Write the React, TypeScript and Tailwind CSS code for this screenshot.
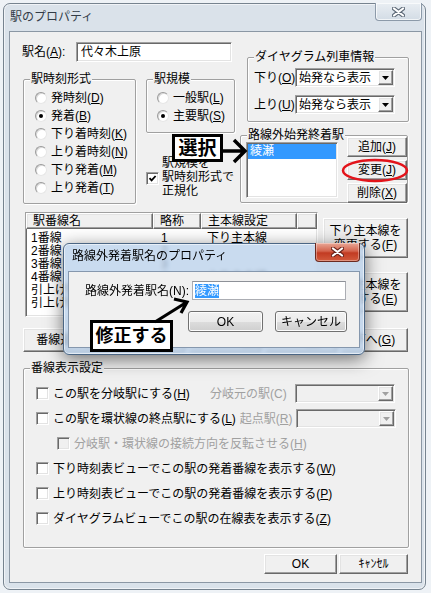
import React from "react";

const FONT = "font-['Liberation_Sans','Noto_Sans_CJK_JP',sans-serif]";

// classic 3D edges
const sunken =
  "border border-t-[#a0a0a0] border-l-[#a0a0a0] border-b-white border-r-white shadow-[inset_1px_1px_0_#696969,inset_-1px_-1px_0_#e3e3e3]";
const raised =
  "border border-t-white border-l-white border-b-[#696969] border-r-[#696969] shadow-[inset_-1px_-1px_0_#a0a0a0,inset_1px_1px_0_#e3e3e3] bg-[#f0f0f0]";

function Mn({ t, k, after = "" }: { t: string; k?: string; after?: string }) {
  return (
    <>
      {t}
      {k && (
        <>
          (<span className="underline underline-offset-[1px]">{k}</span>)
        </>
      )}
      {after}
    </>
  );
}

function Group({ label, className = "", children }: { label: string; className?: string; children?: React.ReactNode }) {
  return (
    <div className={`relative rounded-[2px] border border-[#a0a0a0] shadow-[1px_1px_0_#fff,inset_1px_1px_0_#fff] ${className}`}>
      <span className="absolute left-[6px] top-[-8px] whitespace-nowrap bg-[#f0f0f0] px-[1px] leading-[14px]">{label}</span>
      {children}
    </div>
  );
}

function Radio({ on, children }: { on?: boolean; children: React.ReactNode }) {
  return (
    <div className="flex h-[18px] items-center gap-[4px] whitespace-nowrap">
      <span className="flex h-[12px] w-[12px] items-center justify-center rounded-full border border-t-[#9a9a9a] border-l-[#9a9a9a] border-b-[#e6e6e6] border-r-[#e6e6e6] bg-white shadow-[inset_1px_1px_0_#d8d8d8]">
        {on && <span className="h-[4px] w-[4px] rounded-full bg-black" />}
      </span>
      <span className="leading-[14px]">{children}</span>
    </div>
  );
}

function Box({ on, disabled }: { on?: boolean; disabled?: boolean }) {
  return (
    <span className={`flex h-[13px] w-[13px] shrink-0 items-center justify-center ${sunken} ${disabled ? "bg-[#f0f0f0]" : "bg-white"}`}>
      {on && (
        <svg width="9" height="9" viewBox="0 0 9 9">
          <path d="M1.5 4.2 L3.6 6.4 L7.6 2" stroke="#000" strokeWidth="1.8" fill="none" />
        </svg>
      )}
    </span>
  );
}

function Check({ on, disabled, children }: { on?: boolean; disabled?: boolean; children: React.ReactNode }) {
  return (
    <div className="flex shrink-0 items-center gap-[4px] whitespace-nowrap">
      <Box on={on} disabled={disabled} />
      <span className={`leading-[14px] ${disabled ? "text-[#a0a0a0]" : ""}`}>{children}</span>
    </div>
  );
}

function Combo({ value, disabled, className = "" }: { value?: string; disabled?: boolean; className?: string }) {
  return (
    <div className={`flex h-[19px] w-[100px] shrink-0 items-center ${sunken} ${disabled ? "bg-[#f0f0f0]" : "bg-white"} ${className}`}>
      <span className="flex-1 whitespace-nowrap pl-[3px] leading-[14px]">{value}</span>
      <span className={`mr-[1px] flex h-[15px] w-[15px] items-center justify-center ${raised}`}>
        <svg width="7" height="4" viewBox="0 0 7 4">
          <path d="M0 0h7L3.5 4z" fill={disabled ? "#a0a0a0" : "#000"} />
        </svg>
      </span>
    </div>
  );
}

function Btn({ className = "", children }: { className?: string; children: React.ReactNode }) {
  return (
    <div className={`flex shrink-0 items-center justify-center whitespace-nowrap text-center leading-[14px] ${raised} ${className}`}>
      <span>{children}</span>
    </div>
  );
}

function AeroBtn({ className = "", children }: { className?: string; children: React.ReactNode }) {
  return (
    <div
      className={`flex items-center justify-center rounded-[3px] border border-[#707070] bg-[linear-gradient(#f2f2f2,#ebebeb_50%,#dddddd_51%,#cfcfcf)] leading-[14px] shadow-[inset_0_0_0_1px_#fcfcfc] ${className}`}
    >
      {children}
    </div>
  );
}

function CloseX({ outline }: { outline: string }) {
  return (
    <svg width="13" height="10" viewBox="0 0 13 10">
      <path d="M2 1.5 L11 8.5 M11 1.5 L2 8.5" stroke={outline} strokeWidth="4.2" strokeLinecap="round" />
      <path d="M2 1.5 L11 8.5 M11 1.5 L2 8.5" stroke="#fff" strokeWidth="2.2" strokeLinecap="round" />
    </svg>
  );
}

const rows = [
  ["1番線", "1", "下り主本線"],
  ["2番線", "2", ""],
  ["3番線", "3", ""],
  ["4番線", "4", "上り主本線"],
  ["引上げ線1", "引1", ""],
  ["引上げ線2", "引2", ""],
];

export default function App() {
  return (
    <div className={`relative h-[593px] w-[431px] overflow-hidden bg-[#eef2f6] text-[12px] text-black ${FONT}`}>
      <div className="ml-[3px] pt-[3px]">
        {/* main window */}
        <div className="h-[587px] w-[423px] rounded-[7px] border border-[#76838f] bg-[#dae2ea] shadow-[inset_0_0_0_1px_rgba(255,255,255,0.6)]">
          <div className="flex h-[27px] items-start">
            <span className="pl-[6px] pt-[4px] leading-[18px] text-[#323c47]">駅のプロパティ</span>
            <div className="ml-auto mr-[3px] mt-[-1px] flex h-[18px] w-[47px] items-center justify-center rounded-b-[4px] border border-t-0 border-[#8c9aa9] bg-gradient-to-b from-[#e9eef3] to-[#d3dce5] shadow-[inset_0_0_0_1px_rgba(255,255,255,0.7)]">
              <CloseX outline="#5d6977" />
            </div>
          </div>

          {/* client area */}
          <div className="ml-[5px] h-[552px] w-[413px] border border-[#8b97a4] bg-[#f0f0f0]">
            {/* top section */}
            <div className="flex h-[172px]">
              <div className="w-[230px] pl-[12px]">
                <div className="mt-[10px] flex h-[20px] items-center">
                  <span className="w-[54px] leading-[14px]">
                    <Mn t="駅名" k="A" after=":" />
                  </span>
                  <div className={`flex h-[20px] w-[156px] items-center bg-white pl-[4px] leading-[14px] ${sunken}`}>代々木上原</div>
                </div>
                <div className="mt-[17px] flex">
                  <Group label="駅時刻形式" className="ml-[1px] h-[125px] w-[113px] pl-[11px] pt-[9px]">
                    <Radio><Mn t="発時刻" k="D" /></Radio>
                    <Radio on><Mn t="発着" k="B" /></Radio>
                    <Radio><Mn t="下り着時刻" k="K" /></Radio>
                    <Radio><Mn t="上り着時刻" k="N" /></Radio>
                    <Radio><Mn t="下り発着" k="M" /></Radio>
                    <Radio><Mn t="上り発着" k="T" /></Radio>
                  </Group>
                  <div className="ml-[10px] w-[89px]">
                    <Group label="駅規模" className="h-[54px] pl-[10px] pt-[9px]">
                      <Radio><Mn t="一般駅" k="L" /></Radio>
                      <Radio on><Mn t="主要駅" k="S" /></Radio>
                    </Group>
                    <div className="mt-[23px] flex">
                      <div className="mt-[16px]">
                        <Box on />
                      </div>
                      <div className="ml-[3px] whitespace-nowrap leading-[14px]">
                        駅規模を
                        <br />
                        駅時刻形式で
                        <br />
                        正規化
                      </div>
                    </div>
                  </div>
                </div>
              </div>

              <div className="w-[169px]">
                <Group label="ダイヤグラム列車情報" className="ml-[7px] mt-[25px] h-[65px] w-[162px] pl-[6px] pt-[10px]">
                  <div className="flex h-[19px] items-center">
                    <span className="w-[41px] shrink-0 whitespace-nowrap leading-[14px]"><Mn t="下り" k="O" /></span>
                    <Combo value="始発なら表示" />
                  </div>
                  <div className="mt-[8px] flex h-[19px] items-center">
                    <span className="w-[41px] shrink-0 whitespace-nowrap leading-[14px]"><Mn t="上り" k="U" /></span>
                    <Combo value="始発なら表示" />
                  </div>
                </Group>
                <Group label="路線外始発終着駅" className="mt-[13px] flex h-[68px] w-[168px] pl-[5px]">
                  <div className={`mt-[6px] h-[56px] w-[92px] bg-white p-[1px] ${sunken}`}>
                    <div className="h-[15px] bg-[#3399ff] pl-[2px] leading-[15px] text-white">綾瀬</div>
                  </div>
                  <div className="ml-[9px] mt-[1px] flex flex-col gap-[3px]">
                    <Btn className="h-[20px] w-[60px]"><Mn t="追加" k="J" /></Btn>
                    <Btn className="h-[20px] w-[60px]"><Mn t="変更" k="J" /></Btn>
                    <Btn className="h-[20px] w-[60px]"><Mn t="削除" k="X" /></Btn>
                  </div>
                </Group>
              </div>
            </div>

            {/* track list */}
            <div className="mt-[8px] flex">
              <div className={`ml-[15px] h-[105px] w-[293px] bg-white ${sunken}`}>
                <div className="flex h-[16px] leading-[14px]">
                  <div className={`w-[127px] pl-[6px] ${raised}`}>駅番線名</div>
                  <div className={`w-[48px] pl-[6px] ${raised}`}>略称</div>
                  <div className={`w-[96px] pl-[6px] ${raised}`}>主本線設定</div>
                  <div className={`w-[20px] ${raised}`} />
                </div>
                <div className="pt-[3px]">
                  {rows.map((r, i) => (
                    <div key={i} className="flex h-[13px] items-center whitespace-nowrap leading-[13px]">
                      <span className="w-[127px] pl-[5px]">{r[0]}</span>
                      <span className="w-[48px] pl-[8px]">{r[1]}</span>
                      <span className="w-[96px] pl-[6px]">{r[2]}</span>
                    </div>
                  ))}
                </div>
              </div>
              <div className="ml-[5px] mt-[6px] flex flex-col gap-[14px]">
                <Btn className="h-[40px] w-[85px]">
                  下り主本線を
                  <br />
                  変更する(<span className="underline">F</span>)
                </Btn>
                <Btn className="h-[40px] w-[85px]">
                  上り主本線を
                  <br />
                  変更する(<span className="underline">E</span>)
                </Btn>
              </div>
            </div>

            <div className="ml-[13px] mt-[11px] flex gap-[4px]">
              <Btn className="h-[24px] w-[86px]"><Mn t="番線追加" k="I" /></Btn>
              <Btn className="h-[24px] w-[72px]"><Mn t="番線変更" /></Btn>
              <Btn className="h-[24px] w-[72px]"><Mn t="番線削除" k="D" /></Btn>
              <Btn className="h-[24px] w-[72px]"><Mn t="上へ" k="U" /></Btn>
              <Btn className="h-[24px] w-[67px]"><Mn t="下へ" k="G" /></Btn>
            </div>

            {/* track display settings */}
            <Group label="番線表示設定" className="ml-[13px] mt-[16px] h-[180px] w-[386px] pl-[12px] pt-[12px]">
              <div className="flex h-[25px] items-center">
                <div className="w-[174px]">
                  <Check><Mn t="この駅を分岐駅にする" k="H" /></Check>
                </div>
                <span className="w-[85px] whitespace-nowrap text-[#a0a0a0]">分岐元の駅(C)</span>
                <Combo disabled />
              </div>
              <div className="flex h-[25px] items-center">
                <Check><Mn t="この駅を環状線の終点駅にする" k="L" /></Check>
                <span className="ml-[4px] shrink-0 whitespace-nowrap text-[#a0a0a0]">
                  <Mn t="起点駅" k="R" />
                </span>
                <Combo disabled className="ml-auto mr-[12px]" />
              </div>
              <div className="flex h-[25px] items-center pl-[21px]">
                <Check disabled><Mn t="分岐駅・環状線の接続方向を反転させる" k="H" /></Check>
              </div>
              <div className="flex h-[25px] items-center">
                <Check><Mn t="下り時刻表ビューでこの駅の発着番線を表示する" k="W" /></Check>
              </div>
              <div className="flex h-[25px] items-center">
                <Check><Mn t="上り時刻表ビューでこの駅の発着番線を表示する" k="P" /></Check>
              </div>
              <div className="flex h-[25px] items-center">
                <Check><Mn t="ダイヤグラムビューでこの駅の在線表を表示する" k="Z" /></Check>
              </div>
            </Group>

            <div className="mt-[6px] flex justify-end gap-[2px] pr-[13px]">
              <Btn className="h-[20px] w-[73px]">OK</Btn>
              <Btn className="h-[20px] w-[69px]">ｷｬﾝｾﾙ</Btn>
            </div>
          </div>
        </div>
      </div>

      {/* popup dialog */}
      <div className="absolute left-[63px] top-[243px] h-[112px] w-[302px] rounded-[6px] border border-[#4b6684] bg-[#b7cfe9]/75 shadow-[0_4px_18px_rgba(0,0,0,0.55),inset_0_0_0_1px_rgba(255,255,255,0.55)] backdrop-blur-[2px]">
        <div className="flex h-[27px] items-start">
          <span className="pl-[8px] pt-[3px] leading-[18px]">路線外発着駅名のプロパティ</span>
          <div className="ml-auto mr-[4px] mt-[-1px] flex h-[19px] w-[45px] items-center justify-center rounded-b-[4px] border border-t-0 border-[#6b2a20] bg-[linear-gradient(#e9a897,#d4644d_45%,#c23b22_55%,#d25a3c)] shadow-[inset_0_0_0_1px_rgba(255,255,255,0.35)]">
            <CloseX outline="#6b231a" />
          </div>
        </div>
        <div className="ml-[4px] h-[77px] w-[292px] border border-[#8597ad] bg-[#f0f0f0]">
          <div className="mt-[9px] flex items-center pl-[16px]">
            <span className="w-[107px] whitespace-nowrap leading-[14px]">路線外発着駅名(N):</span>
            <div className="flex h-[19px] w-[154px] items-center border border-[#abadb3] border-t-[#8e9198] bg-white pl-[2px]">
              <span className="bg-[#3399ff] leading-[14px] text-white">綾瀬</span>
            </div>
          </div>
          <div className="mt-[11px] flex gap-[12px] pl-[119px]">
            <AeroBtn className="h-[21px] w-[75px]">OK</AeroBtn>
            <AeroBtn className="h-[21px] w-[72px]">キャンセル</AeroBtn>
          </div>
        </div>
      </div>

      {/* annotation: 選択 */}
      <div className="absolute left-[172px] top-[134px] flex h-[28px] w-[51px] items-center justify-center border-[3px] border-black bg-white text-[19px] font-bold leading-none">
        選択
      </div>
      <svg className="absolute left-[221px] top-[138px]" width="28" height="28" viewBox="0 0 28 28">
        <path d="M1 13 H24 M13 2 L24 13 L13 24" stroke="#000" strokeWidth="3.5" fill="none" />
      </svg>

      {/* red ellipse on 変更 */}
      <svg className="absolute left-[340px] top-[157px]" width="70" height="27" viewBox="0 0 70 27">
        <ellipse cx="35" cy="13.5" rx="32" ry="10.5" stroke="#e3141b" strokeWidth="2.5" fill="none" />
      </svg>

      {/* annotation: 修正する */}
      <div className="absolute left-[90px] top-[320px] flex h-[32px] w-[83px] items-center justify-center border-[3px] border-black bg-white text-[18px] font-bold leading-none">
        修正する
      </div>
      <svg className="absolute left-[150px] top-[294px]" width="42" height="32" viewBox="0 0 42 32">
        <path d="M5 28 L37 8 M24 5 L37 8 L31 19" stroke="#000" strokeWidth="3.2" fill="none" />
      </svg>
    </div>
  );
}
